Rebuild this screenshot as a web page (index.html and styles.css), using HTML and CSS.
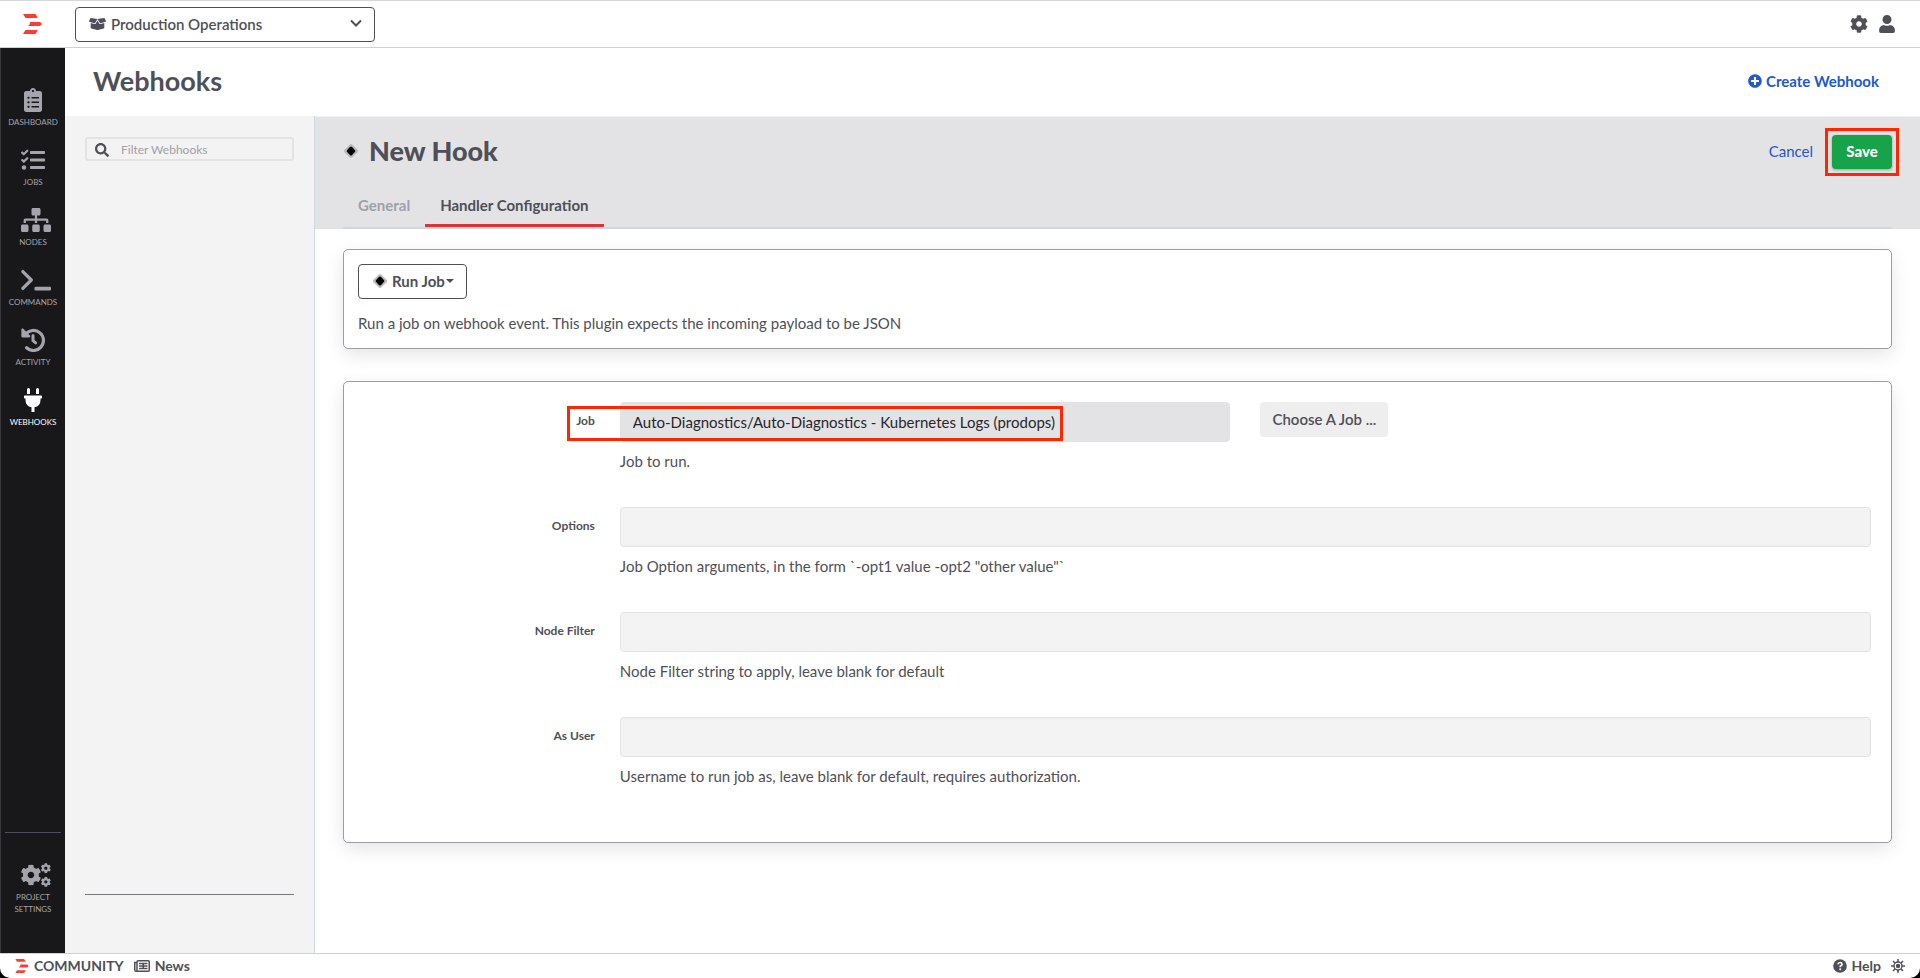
FILE: index.html
```html
<!DOCTYPE html>
<html lang="en">
<head>
<meta charset="utf-8">
<title>Webhooks</title>
<link rel="stylesheet" href="styles.css">
</head>
<body>
<svg class="sprite" aria-hidden="true">
  <symbol id="logo" viewBox="0 0 19 20"><path d="M0 0h12.500l2.500 4H2.500zM7 8h10l2 2-2 2H5l2-2zM2.500 16H15l-2.500 4H0z" fill="#fb3b35"/></symbol>
  <symbol id="cog" viewBox="0 0 512 512"><path d="M487.4 315.7l-42.6-24.6c4.300-23.200 4.300-47 0-70.200l42.600-24.600c4.900-2.800 7.100-8.600 5.500-14-11.100-35.600-30-67.800-54.700-94.600-3.800-4.100-10-5.100-14.800-2.300L380.800 110c-17.900-15.400-38.500-27.300-60.800-35.100V25.800c0-5.600-3.900-10.500-9.400-11.700-36.700-8.200-74.300-7.800-109.200 0-5.500 1.200-9.400 6.100-9.400 11.700V75c-22.200 7.900-42.800 19.800-60.800 35.100L88.700 85.500c-4.900-2.800-11-1.900-14.800 2.300-24.700 26.700-43.600 58.900-54.700 94.600-1.700 5.400.6 11.200 5.500 14L67.300 221c-4.300 23.200-4.300 47 0 70.200l-42.600 24.600c-4.900 2.800-7.100 8.600-5.500 14 11.100 35.600 30 67.800 54.700 94.600 3.800 4.100 10 5.100 14.800 2.300l42.600-24.600c17.900 15.400 38.500 27.300 60.800 35.100v49.200c0 5.600 3.900 10.500 9.400 11.700 36.700 8.200 74.300 7.800 109.200 0 5.500-1.200 9.400-6.100 9.400-11.700v-49.200c22.200-7.900 42.800-19.800 60.800-35.100l42.600 24.600c4.900 2.800 11 1.900 14.800-2.300 24.700-26.700 43.600-58.900 54.700-94.600 1.500-5.500-.7-11.300-5.600-14.100zM256 336c-44.100 0-80-35.900-80-80s35.900-80 80-80 80 35.900 80 80-35.900 80-80 80z"/></symbol>
  <symbol id="diamond" viewBox="0 0 16 16"><rect x="2.500" y="2.500" width="11" height="11" rx="2" transform="rotate(45 8 8)" fill="#b9b9b9"/><rect x="4.500" y="4.500" width="7" height="7" rx="1.500" transform="rotate(45 8 8)" fill="#000"/></symbol>
</svg>

<header class="topbar">
  <a class="brand" href="#" aria-label="Home"><svg class="brand-mark"><use href="#logo"/></svg></a>
  <div class="project-picker">
    <svg class="picker-box" viewBox="0 0 640 512"><path d="M425.700 256c-16.900 0-32.800-9-41.400-23.400L320 126l-64.200 106.600c-8.700 14.500-24.600 23.500-41.500 23.500-4.500 0-9-.6-13.300-1.900L64 215v178c0 14.700 10 27.500 24.200 31l216.200 54.100c10.200 2.500 20.900 2.500 31 0L551.800 424c14.200-3.600 24.200-16.400 24.200-31V215l-137 39.100c-4.300 1.300-8.800 1.900-13.300 1.900zm212.600-112.200L586.800 41c-3.100-6.200-9.800-9.800-16.700-8.900L320 64l91.700 152.100c3.800 6.300 11.400 9.300 18.500 7.300l197.900-56.500c9.900-2.900 14.700-13.900 10.200-23.100zM53.200 41L1.700 143.800c-4.600 9.200.3 20.200 10.100 23l197.900 56.500c7.100 2 14.700-1 18.500-7.300L320 64 69.800 32.100c-6.900-.8-13.500 2.700-16.600 8.900z"/></svg>
    <select class="picker-select" aria-label="Project"><option>Production Operations</option></select>
    <svg class="picker-arrow" viewBox="0 0 12 8"><path d="M1 1.500l5 5 5-5" fill="none" stroke="currentColor" stroke-width="2"/></svg>
  </div>
  <nav class="top-actions" aria-label="Account">
    <a href="#" aria-label="Settings"><svg class="icon-top"><use href="#cog"/></svg></a>
    <a href="#" aria-label="User"><svg class="icon-top" viewBox="0 0 448 512"><path d="M224 256c70.700 0 128-57.300 128-128S294.700 0 224 0 96 57.300 96 128s57.300 128 128 128zm89.600 32h-16.700c-22.200 10.200-46.900 16-72.900 16s-50.600-5.800-72.900-16h-16.700C60.200 288 0 348.200 0 422.400V464c0 26.500 21.500 48 48 48h352c26.500 0 48-21.500 48-48v-41.600c0-74.200-60.200-134.400-134.400-134.400z"/></svg></a>
  </nav>
</header>

<div class="shell">
  <nav class="sidebar" aria-label="Project">
    <div class="side-list">
      <a class="side-item" href="#"><svg class="side-icon" viewBox="0 0 384 512"><path d="M336 64h-80c0-35.300-28.700-64-64-64s-64 28.700-64 64H48C21.500 64 0 85.500 0 112v352c0 26.500 21.500 48 48 48h288c26.500 0 48-21.500 48-48V112c0-26.500-21.500-48-48-48zM96 424c-13.300 0-24-10.700-24-24s10.700-24 24-24 24 10.700 24 24-10.700 24-24 24zm0-96c-13.300 0-24-10.700-24-24s10.700-24 24-24 24 10.700 24 24-10.700 24-24 24zm0-96c-13.300 0-24-10.700-24-24s10.700-24 24-24 24 10.700 24 24-10.700 24-24 24zm96-192c13.300 0 24 10.700 24 24s-10.700 24-24 24-24-10.700-24-24 10.700-24 24-24zm128 368c0 4.400-3.600 8-8 8H168c-4.400 0-8-3.600-8-8v-16c0-4.400 3.600-8 8-8h144c4.400 0 8 3.600 8 8v16zm0-96c0 4.400-3.600 8-8 8H168c-4.400 0-8-3.600-8-8v-16c0-4.400 3.600-8 8-8h144c4.400 0 8 3.600 8 8v16zm0-96c0 4.400-3.600 8-8 8H168c-4.400 0-8-3.600-8-8v-16c0-4.400 3.600-8 8-8h144c4.400 0 8 3.600 8 8v16z"/></svg>DASHBOARD</a>
      <a class="side-item" href="#"><svg class="side-icon" viewBox="0 0 512 512"><path d="M139.610 35.500a12 12 0 0 0-17 0L58.930 98.810l-22.700-22.120a12 12 0 0 0-17 0L3.530 92.410a12 12 0 0 0 0 17l47.590 47.400a12.780 12.780 0 0 0 17.610 0l15.590-15.620L156.520 69a12.090 12.090 0 0 0 .09-17zm0 159.190a12 12 0 0 0-17 0l-63.680 63.720-22.700-22.100a12 12 0 0 0-17 0L3.530 252a12 12 0 0 0 0 17L51 316.500a12.770 12.770 0 0 0 17.600 0l15.700-15.690 72.200-72.220a12 12 0 0 0 .09-16.900zM64 368c-26.490 0-48.590 21.500-48.590 48S37.530 464 64 464a48 48 0 0 0 0-96zm432 16H208a16 16 0 0 0-16 16v32a16 16 0 0 0 16 16h288a16 16 0 0 0 16-16v-32a16 16 0 0 0-16-16zm0-320H208a16 16 0 0 0-16 16v32a16 16 0 0 0 16 16h288a16 16 0 0 0 16-16V80a16 16 0 0 0-16-16zm0 160H208a16 16 0 0 0-16 16v32a16 16 0 0 0 16 16h288a16 16 0 0 0 16-16v-32a16 16 0 0 0-16-16z"/></svg>JOBS</a>
      <a class="side-item" href="#"><svg class="side-icon wide" viewBox="0 0 640 512"><path d="M128 352H32c-17.670 0-32 14.330-32 32v96c0 17.670 14.330 32 32 32h96c17.670 0 32-14.330 32-32v-96c0-17.670-14.330-32-32-32zm-24-80h192v48h48v-48h192v48h48v-57.590c0-21.170-17.230-38.410-38.410-38.410H344v-64h40c17.670 0 32-14.330 32-32V32c0-17.670-14.330-32-32-32H256c-17.670 0-32 14.330-32 32v96c0 17.670 14.330 32 32 32h40v64H94.410C73.230 224 56 241.230 56 262.410V320h48v-48zm264 80h-96c-17.670 0-32 14.330-32 32v96c0 17.670 14.330 32 32 32h96c17.670 0 32-14.330 32-32v-96c0-17.670-14.330-32-32-32zm240 0h-96c-17.670 0-32 14.330-32 32v96c0 17.670 14.330 32 32 32h96c17.670 0 32-14.330 32-32v-96c0-17.670-14.330-32-32-32z"/></svg>NODES</a>
      <a class="side-item" href="#"><svg class="side-icon wide" viewBox="0 0 640 512"><path d="M40 76l180 180L40 436" fill="none" stroke="currentColor" stroke-width="68" stroke-linecap="round" stroke-linejoin="round"/><rect x="288" y="400" width="352" height="80" rx="26"/></svg>COMMANDS</a>
      <a class="side-item" href="#"><svg class="side-icon" viewBox="0 0 512 512"><path d="M100 130a214 214 0 1 1 19 292" fill="none" stroke="currentColor" stroke-width="68" stroke-linecap="round"/><path d="M8 34v142a24 24 0 0 0 24 24h142c21 0 32-26 17-41L49 17C34 2 8 13 8 34z"/><path d="M256 160v110l56 46" fill="none" stroke="currentColor" stroke-width="64" stroke-linecap="round" stroke-linejoin="round"/></svg>ACTIVITY</a>
      <a class="side-item active" href="#" aria-current="page"><svg class="side-icon" viewBox="0 0 384 512"><path d="M320 32a32 32 0 0 0-64 0v96h64zm48 128H16a16 16 0 0 0-16 16v32a16 16 0 0 0 16 16h16v32a160.070 160.070 0 0 0 128 156.800V512h64v-99.200A160.070 160.070 0 0 0 352 256v-32h16a16 16 0 0 0 16-16v-32a16 16 0 0 0-16-16zM128 32a32 32 0 0 0-64 0v96h64z"/></svg>WEBHOOKS</a>
    </div>
    <div class="side-bottom">
      <a class="side-item" href="#"><svg class="side-icon wide" viewBox="0 0 640 512"><use href="#cog" x="-14" y="30" width="452" height="452"/><use href="#cog" x="420" y="0" width="220" height="220"/><use href="#cog" x="420" y="292" width="220" height="220"/></svg>PROJECT<br>SETTINGS</a>
    </div>
  </nav>

  <main class="page">
    <div class="page-head">
      <h1 class="page-title">Webhooks</h1>
      <a class="create-link" href="#"><svg class="icon-sm" viewBox="0 0 512 512"><path d="M256 8C119 8 8 119 8 256s111 248 248 248 248-111 248-248S393 8 256 8zm144 276c0 6.600-5.400 12-12 12h-92v92c0 6.600-5.400 12-12 12h-56c-6.600 0-12-5.400-12-12v-92h-92c-6.600 0-12-5.400-12-12v-56c0-6.600 5.400-12 12-12h92v-92c0-6.600 5.400-12 12-12h56c6.600 0 12 5.400 12 12v92h92c6.600 0 12 5.400 12 12v56z"/></svg>Create Webhook</a>
    </div>
    <div class="columns">
      <aside class="hook-list">
        <label class="filter">
          <svg class="icon-sm" viewBox="0 0 512 512"><path d="M505 442.700L405.300 343c-4.500-4.500-10.600-7-17-7H372c27.600-35.300 44-79.700 44-128C416 93.100 322.900 0 208 0S0 93.100 0 208s93.100 208 208 208c48.300 0 92.700-16.400 128-44v16.300c0 6.400 2.500 12.500 7 17l99.700 99.700c9.400 9.400 24.600 9.400 33.900 0l28.300-28.300c9.400-9.400 9.400-24.600.1-34zM208 336c-70.700 0-128-57.200-128-128 0-70.700 57.200-128 128-128 70.700 0 128 57.200 128 128 0 70.700-57.200 128-128 128z"/></svg>
          <input class="filter-input" type="text" placeholder="Filter Webhooks" aria-label="Filter Webhooks">
        </label>
        <hr class="list-rule">
      </aside>
      <section class="editor">
        <div class="editor-head">
          <div class="editor-bar">
            <h2 class="hook-title"><svg class="icon-diamond"><use href="#diamond"/></svg>New Hook</h2>
            <div class="editor-actions">
              <a class="cancel" href="#">Cancel</a>
              <div class="marked"><button class="save" type="button">Save</button></div>
            </div>
          </div>
          <div class="tabs" role="tablist">
            <button class="tab" type="button" role="tab" aria-selected="false">General</button>
            <button class="tab selected" type="button" role="tab" aria-selected="true">Handler Configuration</button>
          </div>
        </div>
        <div class="editor-body">
          <div class="card plugin-card">
            <button class="plugin-button" type="button"><svg class="icon-diamond"><use href="#diamond"/></svg>Run Job<span class="caret"></span></button>
            <p class="plugin-text">Run a job on webhook event. This plugin expects the incoming payload to be JSON</p>
          </div>
          <form class="card config-card">
            <div class="field">
              <label class="field-label" for="job">Job</label>
              <div class="control">
                <div class="job-row">
                  <input class="text-input locked" id="job" type="text" readonly value="Auto-Diagnostics/Auto-Diagnostics - Kubernetes Logs (prodops)">
                  <button class="choose" type="button">Choose A Job ...</button>
                </div>
                <span class="mark-job"></span>
                <p class="help">Job to run.</p>
              </div>
            </div>
            <div class="field">
              <label class="field-label" for="options">Options</label>
              <div class="control"><input class="text-input" id="options" type="text"><p class="help">Job Option arguments, in the form `-opt1 value -opt2 "other value"`</p></div>
            </div>
            <div class="field">
              <label class="field-label" for="nodes">Node Filter</label>
              <div class="control"><input class="text-input" id="nodes" type="text"><p class="help">Node Filter string to apply, leave blank for default</p></div>
            </div>
            <div class="field">
              <label class="field-label" for="user">As User</label>
              <div class="control"><input class="text-input" id="user" type="text"><p class="help">Username to run job as, leave blank for default, requires authorization.</p></div>
            </div>
          </form>
        </div>
      </section>
    </div>
  </main>
</div>

<footer class="footer">
  <a class="foot-link" href="#"><svg class="foot-logo"><use href="#logo"/></svg>COMMUNITY</a>
  <a class="foot-link" href="#"><svg class="foot-news" viewBox="0 0 16 12"><path d="M3 1.750q0-1 1-1h10.250q1 0 1 1v8.500q0 1-1 1H2q-1.250 0-1.250-1.250V2.500H3V10q0 1.250-1 1.250M5 3.500h8.500M5 6h8.500M5 8.500h8.500M9.250 3v5" fill="none" stroke="currentColor" stroke-width="1.500"/></svg>News</a>
  <span class="spacer"></span>
  <a class="foot-link" href="#"><svg class="icon-sm" viewBox="0 0 14 14"><circle cx="7" cy="7" r="6.800"/><path d="M4.900 5.400Q5.200 3.500 7 3.500T9.200 5.300Q9.200 6.300 7.200 7.200V8.300" fill="none" stroke="#fff" stroke-width="1.600"/><circle cx="7.200" cy="10.300" r="1" fill="#fff"/></svg>Help</a>
  <button class="theme" type="button" aria-label="Theme"><svg class="icon-sm" viewBox="0 0 14 14"><circle cx="7" cy="7" r="4" fill="none" stroke="currentColor" stroke-width="1.400"/><circle cx="7" cy="7" r="2.200"/><path d="M7 0v3M7 11v3M0 7h3M11 7h3M2 2l2 2M10 10l2 2M12 2l-2 2M4 10l-2 2" stroke="currentColor" stroke-width="1.500"/></svg></button>
</footer>
</body>
</html>
```

FILE: styles.css
```css
* {
  box-sizing: border-box;
}

html {
  background: #000;
}

body {
  margin: 0;
  min-height: 100vh;
  display: flex;
  flex-direction: column;
  font-family: Lato, "Open Sans", sans-serif;
  font-size: 15px;
  line-height: 20px;
  color: #4f4f58;
}

a {
  color: inherit;
  text-decoration: none;
}

button,
input,
select {
  font: inherit;
  color: inherit;
}

h1,
h2,
p {
  margin: 0;
}

svg {
  display: block;
  fill: currentColor;
  flex: none;
}

.sprite {
  position: absolute;
  width: 0;
  height: 0;
}

.icon-sm {
  width: 14px;
  height: 14px;
}

.icon-diamond {
  width: 16px;
  height: 16px;
}

/* Top bar */
.topbar {
  display: flex;
  align-items: center;
  height: 48px;
  background: #fff;
  border-top: 1px solid #d6d7d8;
  border-bottom: 1px solid #cfd0d2;
}

.brand {
  display: flex;
  width: 75px;
  padding-left: 23px;
}

.brand-mark {
  width: 19px;
  height: 20px;
}

.project-picker {
  position: relative;
  width: 300px;
}

.picker-select {
  appearance: none;
  display: block;
  width: 100%;
  height: 35px;
  padding: 0 35px 1px;
  background: #fff;
  border: 1px solid #4f4f58;
  border-radius: 4px;
  font-weight: 600;
}

.picker-box {
  position: absolute;
  left: 14px;
  top: 10px;
  width: 17px;
  height: 14px;
}

.picker-arrow {
  position: absolute;
  right: 13px;
  top: 12px;
  width: 12px;
  height: 8px;
}

.top-actions {
  display: flex;
  gap: 10px;
  margin-left: auto;
  padding: 0 24px 1px 0;
}

.icon-top {
  width: 18px;
  height: 18px;
}

/* Project navigation */
.shell {
  display: flex;
  flex: 1;
  background: #fff;
}

.sidebar {
  display: flex;
  flex-direction: column;
  justify-content: space-between;
  width: 65px;
  padding-top: 40px;
  background: #18181a;
  border-left: 1px solid #37373b;
  color: #a4a4ad;
}

.side-list {
  display: grid;
  grid-auto-rows: 60px;
}

.side-item {
  display: flex;
  flex-direction: column;
  align-items: center;
  gap: 4px;
  font-size: 8px;
  line-height: 12px;
  text-align: center;
}

.side-icon {
  width: 24px;
  height: 24px;
}

.side-icon.wide {
  width: 30px;
  margin-left: 6px;
}

.side-item.active {
  color: #fff;
}

.side-bottom {
  margin: 0 4px;
  padding: 30px 0 38px;
  border-top: 1px solid #4f4f58;
}

/* Page */
.page {
  display: flex;
  flex-direction: column;
  flex: 1;
  min-width: 0;
}

.page-head {
  display: flex;
  align-items: center;
  justify-content: space-between;
  height: 68px;
  padding: 0 41px 3px 28px;
}

.page-title {
  font-size: 27px;
  line-height: 32px;
  font-weight: 700;
}

.create-link {
  display: flex;
  align-items: center;
  gap: 4px;
  color: #2257d1;
  font-weight: 700;
}

.columns {
  display: flex;
  flex: 1;
}

.hook-list {
  display: flex;
  flex-direction: column;
  justify-content: space-between;
  width: 250px;
  padding: 21px 20px 58px;
  background: #f3f3f3;
  border-right: 1px solid #cfd9e6;
}

.filter {
  display: flex;
  align-items: center;
  gap: 12px;
  height: 24px;
  padding: 2px 0 0 8px;
  border: 2px solid #e3e3e5;
  border-radius: 3px;
}

.filter-input {
  flex: 1;
  min-width: 0;
  padding: 0;
  border: 0;
  background: none;
  font-size: 12px;
  line-height: 16px;
}

.filter-input::placeholder {
  color: #a0a0a9;
}

.list-rule {
  width: 100%;
  margin: 0;
  border: 0;
  border-top: 1px solid #77777c;
}

.editor {
  flex: 1;
  min-width: 0;
}

.editor-head {
  padding: 18px 28px 0;
  background: #e3e3e5;
  border-top: 1px solid #f3f3f3;
}

.editor-bar {
  display: flex;
  align-items: center;
  justify-content: space-between;
}

.hook-title {
  display: flex;
  align-items: center;
  gap: 10px;
  padding-bottom: 2px;
  font-size: 27px;
  line-height: 32px;
  font-weight: 900;
}

.editor-actions {
  display: flex;
  align-items: center;
  gap: 19px;
}

.cancel {
  padding-bottom: 2px;
  color: #2257d1;
}

.marked {
  position: relative;
}

.marked::after {
  content: "";
  position: absolute;
  inset: -7px;
  border: 3px solid #ff2600;
  pointer-events: none;
}

.save {
  display: block;
  width: 60px;
  height: 34px;
  padding: 0 0 2px;
  border: 0;
  border-radius: 4px;
  background: #16a34a;
  box-shadow: 0 1px 3px rgba(0, 0, 0, 0.3);
  color: #fff;
  font-weight: 900;
}

.tabs {
  display: flex;
  height: 60px;
  align-items: flex-end;
  border-bottom: 2px solid #cdd7e2;
}

.tab {
  height: 43px;
  padding: 2px 15px 0;
  border: 0;
  border-bottom: 3px solid transparent;
  background: none;
  color: #a0a0a9;
  font-weight: 700;
}

.tab.selected {
  border-color: #db3338;
  color: #4f4f58;
}

.editor-body {
  display: grid;
  gap: 32px;
  padding: 20px 28px 40px;
}

.card {
  background: #fff;
  border: 1px solid #9c9ca6;
  border-radius: 5px;
  box-shadow: 0 6px 18px rgba(0, 0, 0, 0.1);
}

.plugin-card {
  padding: 14px 14px 15px;
}

.plugin-button {
  display: flex;
  align-items: center;
  gap: 4px;
  height: 35px;
  padding: 0 12px 1px 13px;
  background: #fff;
  border: 1px solid #4f4f58;
  border-radius: 4px;
  font-weight: 700;
}

.caret {
  margin-left: -3px;
  border: 4px solid transparent;
  border-top-color: currentColor;
  border-bottom: 0;
}

.plugin-text {
  margin-top: 14px;
}

.config-card {
  display: grid;
  gap: 36px;
  padding: 20px 20px 56px;
}

.field {
  display: grid;
  grid-template-columns: 1fr 5.42fr;
  gap: 25px;
}

.field-label {
  padding-top: 11px;
  font-size: 12px;
  line-height: 16px;
  font-weight: 700;
  text-align: right;
}

.control {
  position: relative;
}

.text-input {
  display: block;
  width: 100%;
  height: 40px;
  padding: 0 12px;
  background: #f3f3f3;
  border: 1px solid #e3e3e5;
  border-radius: 4px;
}

.text-input.locked {
  background: #e3e3e5;
  color: #27272a;
}

.job-row {
  display: grid;
  grid-template-columns: 1fr 1fr;
  gap: 30px;
}

.choose {
  justify-self: start;
  height: 35px;
  width: 128px;
  padding: 0 0 2px;
  border: 0;
  border-radius: 4px;
  background: #eee;
  font-weight: 600;
}

.mark-job {
  position: absolute;
  left: -53px;
  top: 4px;
  width: 496px;
  height: 35px;
  border: 3px solid #ff2600;
  pointer-events: none;
}

.help {
  margin-top: 9px;
}

/* Footer */
.footer {
  display: flex;
  align-items: center;
  gap: 10px;
  height: 25px;
  padding: 0 15px 1px;
  background: #fff;
  border-top: 1px solid #cfd0d2;
  border-radius: 0 0 10px 10px;
  font-size: 14px;
  font-weight: 700;
}

.foot-link {
  display: flex;
  align-items: center;
  gap: 5px;
}

.foot-logo {
  width: 14px;
  height: 14px;
}

.foot-news {
  width: 16px;
  height: 12px;
}

.spacer {
  flex: 1;
}

.theme {
  padding: 0;
  border: 0;
  background: none;
}
```
